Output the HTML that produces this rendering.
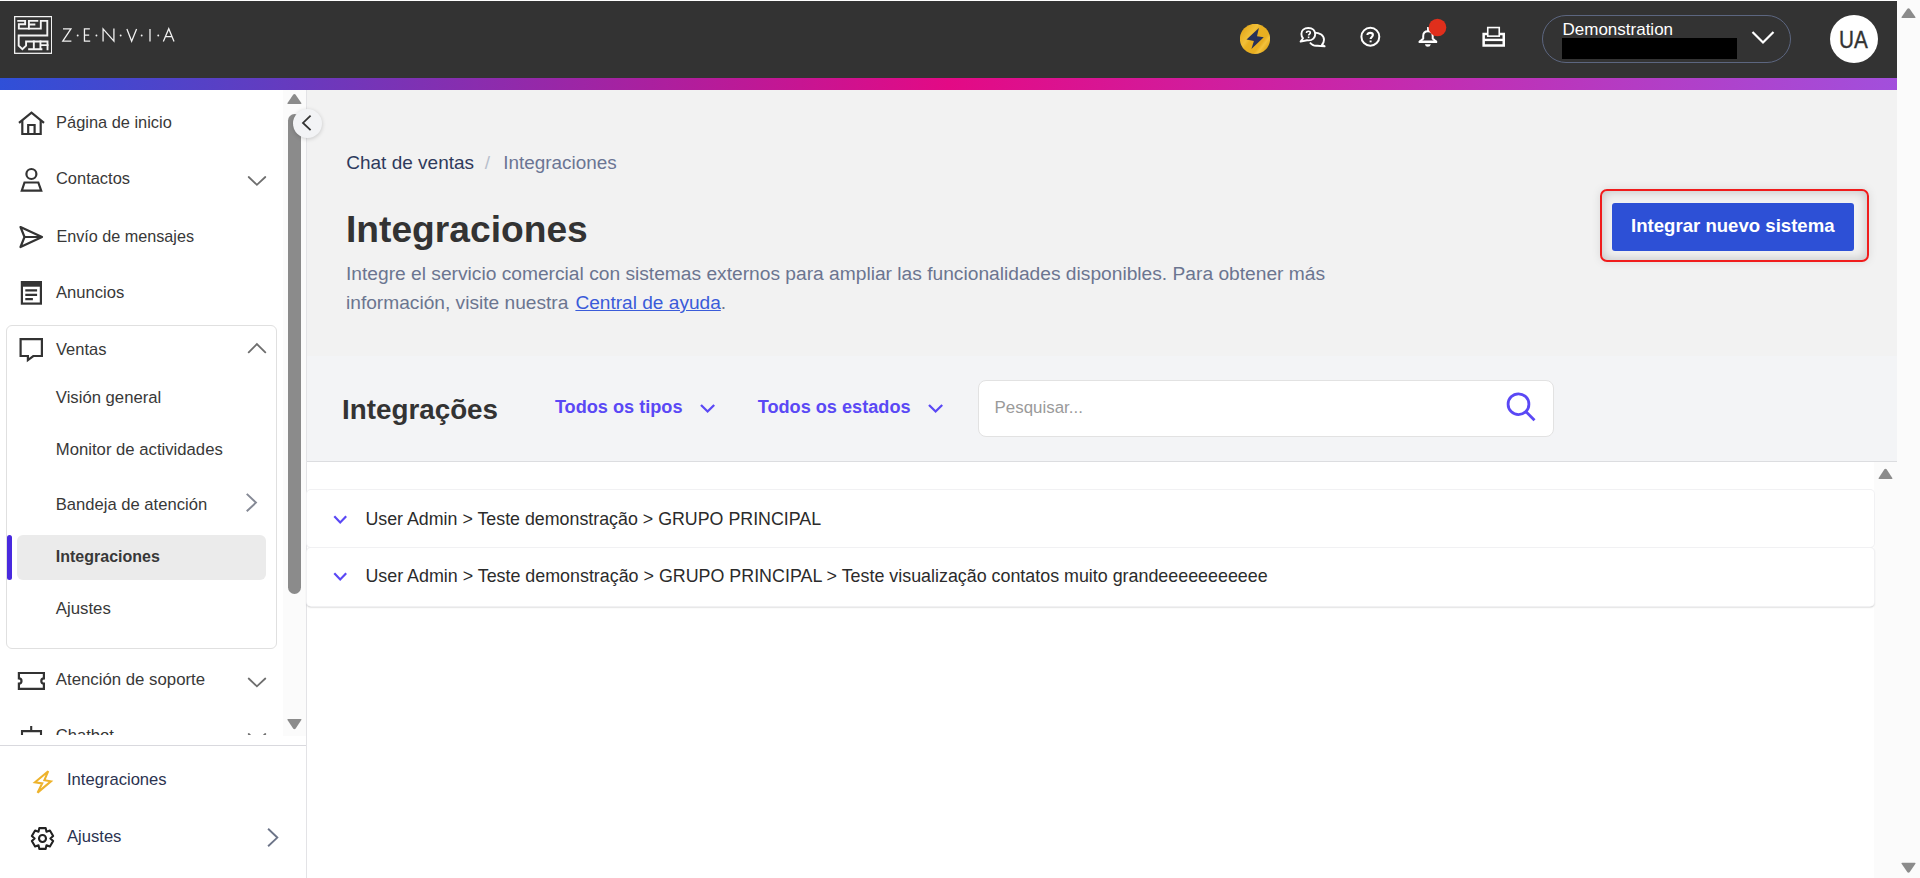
<!DOCTYPE html>
<html><head><meta charset="utf-8"><style>
html,body{margin:0;padding:0;}
body{width:1920px;height:878px;overflow:hidden;position:relative;background:#fff;font-family:"Liberation Sans", sans-serif;}
.t{position:absolute;white-space:nowrap;line-height:1;}
svg{display:block;}
</style></head><body>
<div style="position:absolute;left:307px;top:90px;width:1590px;height:266px;background:#f2f2f2"></div>
<div style="position:absolute;left:307px;top:356px;width:1590px;height:106px;background:#f3f4f6;border-bottom:1px solid #dcdde0;box-sizing:border-box"></div>
<div style="position:absolute;left:307px;top:462px;width:1567px;height:416px;background:#fff"></div>
<div style="position:absolute;left:1874px;top:462px;width:23px;height:416px;background:#fbfbfb"></div>
<div style="position:absolute;left:1897px;top:0px;width:23px;height:878px;background:#fbfbfb"></div>
<svg style="position:absolute;left:0;top:0;overflow:visible" width="1" height="1"><path d="M1907.40 8.77 Q1908.50 7.80 1909.60 8.77 L1915.40 16.90 Q1916.10 18.00 1914.70 18.00 L1902.30 18.00 Q1900.90 18.00 1901.60 16.90 Z" fill="#8b8b8b"/></svg>
<svg style="position:absolute;left:0;top:0;overflow:visible" width="1" height="1"><path d="M1907.40 872.23 Q1908.50 873.20 1909.60 872.23 L1915.40 863.80 Q1916.10 862.70 1914.70 862.70 L1902.30 862.70 Q1900.90 862.70 1901.60 863.80 Z" fill="#8b8b8b"/></svg>
<svg style="position:absolute;left:0;top:0;overflow:visible" width="1" height="1"><path d="M1884.40 469.17 Q1885.50 468.20 1886.60 469.17 L1892.30 477.90 Q1893.00 479.00 1891.60 479.00 L1879.40 479.00 Q1878.00 479.00 1878.70 477.90 Z" fill="#8b8b8b"/></svg>
<div style="position:absolute;left:0px;top:90px;width:306px;height:788px;background:#fff"></div>
<div style="position:absolute;left:306px;top:90px;width:1px;height:788px;background:#e3e3e6"></div>
<div style="position:absolute;left:283px;top:90px;width:23px;height:646px;background:#fbfbfb"></div>
<svg style="position:absolute;left:0;top:0;overflow:visible" width="1" height="1"><path d="M293.30 94.57 Q294.40 93.60 295.50 94.57 L301.30 102.90 Q302.00 104.00 300.60 104.00 L288.20 104.00 Q286.80 104.00 287.50 102.90 Z" fill="#8b8b8b"/></svg>
<div style="position:absolute;left:288px;top:114px;width:13px;height:480px;background:#8b8b8b;border-radius:6.5px"></div>
<svg style="position:absolute;left:0;top:0;overflow:visible" width="1" height="1"><path d="M293.30 728.73 Q294.40 729.70 295.50 728.73 L301.30 720.10 Q302.00 719.00 300.60 719.00 L288.20 719.00 Q286.80 719.00 287.50 720.10 Z" fill="#8b8b8b"/></svg>
<div style="position:absolute;left:0px;top:745px;width:306px;height:1px;background:#d9d9de"></div>
<div style="position:absolute;left:0px;top:1px;width:1897px;height:77px;background:#333333"></div>
<div style="position:absolute;left:0px;top:78px;width:1897px;height:12px;background:linear-gradient(90deg,#2f50d8 0%,#e30a85 50%,#a24fdc 100%)"></div>
<svg style="position:absolute;left:14px;top:16px;" width="38.3" height="38" viewBox="80 75 730 725"><g fill="none" stroke="#f4f4f4" stroke-linecap="square" stroke-linejoin="miter"><rect x="92" y="87" width="706" height="700" stroke-width="24"/><path stroke-width="36" d="M160 168 H292 V233 H172 V315 H591 V168 H715 V446 H169 V639 L240 710 L310 639 V561 H719 V710"/><path stroke-width="36" d="M364 168 V315 M364 168 H525 M364 237 H469 M458 561 V710 M368 710 H603 M584 561 V710 M584 630 H719"/></g></svg>
<svg style="position:absolute;left:55px;top:20px;" width="130" height="30" viewBox="0 0 1920 443"><g fill="none" stroke="#f2f2f2" stroke-width="19" stroke-linejoin="miter"><path d="M118 132 H235 L115 312 H242"/><path d="M515 132 H435 V312 H520 M435 222 H505"/><path d="M710 318 V132 L870 312 V126"/><path d="M1062 132 L1132 315 L1205 132"/><path d="M1403 132 V318"/><path d="M1600 318 L1680 128 L1758 318 M1630 245 H1730"/></g><g fill="#f2f2f2"><circle cx="335" cy="228" r="14"/><circle cx="612" cy="228" r="14"/><circle cx="970" cy="228" r="14"/><circle cx="1280" cy="228" r="14"/><circle cx="1525" cy="228" r="14"/></g></svg>
<svg style="position:absolute;left:1240px;top:24px;" width="30" height="30" viewBox="0 0 30 30"><defs><linearGradient id="gg" x1="0.1" y1="0.2" x2="0.9" y2="0.8"><stop offset="0" stop-color="#e6ab1e"/><stop offset="0.3" stop-color="#f2c038"/><stop offset="0.42" stop-color="#e9b020"/><stop offset="0.75" stop-color="#e8ae21"/><stop offset="0.85" stop-color="#f4c23c"/><stop offset="1" stop-color="#e3a91c"/></linearGradient></defs><circle cx="15" cy="14.9" r="15.1" fill="url(#gg)"/><path d="M18.9 4 L6.5 15.6 L13.9 17 L11.4 25.1 L23.75 13.3 L17 12.3 Z" fill="#283158"/></svg>
<svg style="position:absolute;left:1298px;top:25px;" width="30" height="24" viewBox="0 0 30 24"><g fill="none" stroke="#fff" stroke-width="1.9" stroke-linejoin="round"><path d="M16 7.6 C22 7.6 26 10.5 26 14.8 C26 17 25 18.6 24 19.6 L26.6 21.4 L19.5 20.7 C16.5 21 13.5 19.8 12 17.5"/><path d="M10.3 3 C6 3 3.4 5.6 3.4 9 C3.4 10.8 4 12.2 5 13.2 L2.6 16.6 L9 15.3 C9.6 15.4 10.1 15.4 10.6 15.4 C14.6 15.4 17.2 12.6 17.2 9.2 C17.2 5.6 14.6 3 10.3 3 Z" fill="#333"/></g><path d="M8.5 7.9 C8.5 6.9 9.3 6.2 10.4 6.2 C11.5 6.2 12.3 6.9 12.3 7.8 C12.3 9 10.6 9.2 10.6 10.6" fill="none" stroke="#fff" stroke-width="1.6"/><rect x="9.8" y="11.5" width="1.6" height="1.6" fill="#fff"/></svg>
<svg style="position:absolute;left:1359px;top:26px;" width="22" height="22" viewBox="0 0 22 22"><circle cx="11.35" cy="10.7" r="8.95" fill="none" stroke="#fff" stroke-width="2"/><path d="M8.4 9 C8.4 7.6 9.6 6.9 11.2 6.9 C12.8 6.9 13.9 7.8 13.9 9.1 C13.9 10.9 11.6 11 11.6 13" fill="none" stroke="#fff" stroke-width="2.1"/><rect x="10.6" y="14.5" width="2" height="1.8" fill="#fff"/></svg>
<svg style="position:absolute;left:1417px;top:25px;" width="22" height="24" viewBox="0 0 22 24"><path d="M6.2 13.4 V10.9 C6.2 8 8.1 6.2 10.95 6.2 C13.8 6.2 15.7 8 15.7 10.9 V13.4 L19.4 16.9 H2.5 Z" fill="none" stroke="#fff" stroke-width="2" stroke-linejoin="round"/><rect x="10.05" y="2" width="1.8" height="4" fill="#fff"/><rect x="1.9" y="15.6" width="18.1" height="2.5" rx="0.6" fill="#fff"/><path d="M7.9 19.3 H13.8 Q13.3 21.8 10.85 21.8 Q8.4 21.8 7.9 19.3 Z" fill="#fff"/></svg>
<svg style="position:absolute;left:1428px;top:18px;" width="19" height="19" viewBox="0 0 19 19"><circle cx="9.5" cy="9.5" r="8.8" fill="#e02f1c"/></svg>
<svg style="position:absolute;left:1480px;top:25px;" width="28" height="24" viewBox="0 0 28 24"><g fill="none" stroke="#fff"><rect x="3.65" y="9" width="20.1" height="11.5" stroke-width="2.5"/><path d="M3 14.9 H24.5" stroke-width="2.4"/></g><rect x="7.75" y="2.55" width="11.5" height="8.6" fill="#333" stroke="#fff" stroke-width="1.6"/></svg>
<div style="position:absolute;left:1542px;top:15px;width:249px;height:48px;box-sizing:border-box;border:1px solid #5c6680;border-radius:24px"></div>
<div class="t" style="left:1562.50px;top:20.61px;font-size:17px;color:#fff;font-weight:400;">Demonstration</div>
<div style="position:absolute;left:1562px;top:38px;width:175px;height:21px;background:#000"></div>
<svg style="position:absolute;left:1748px;top:26px;" width="30" height="22" viewBox="0 0 30 22"><path d="M4.5 6 L15 16.5 L25.5 6" fill="none" stroke="#fff" stroke-width="2.2"/></svg>
<div style="position:absolute;left:1830px;top:15px;width:48px;height:48px;background:#fff;border-radius:50%"></div>
<div class="t" style="left:1839.20px;top:29.33px;font-size:23px;color:#333;font-weight:400;transform:scaleX(0.9);transform-origin:0 0;-webkit-text-stroke:0.35px #333;">UA</div>
<div class="t" style="left:56.10px;top:114.11px;font-size:16.4px;color:#383838;font-weight:400;">Página de inicio</div>
<div class="t" style="left:56.00px;top:170.37px;font-size:16.45px;color:#383838;font-weight:400;">Contactos</div>
<div class="t" style="left:56.40px;top:227.58px;font-size:16.2px;color:#383838;font-weight:400;">Envío de mensajes</div>
<div class="t" style="left:56.00px;top:285.14px;font-size:16.6px;color:#383838;font-weight:400;">Anuncios</div>
<div style="position:absolute;left:6px;top:325px;width:271px;height:324px;box-sizing:border-box;border:1px solid #e0e0e0;border-radius:6px;background:#fff"></div>
<div class="t" style="left:56.00px;top:341.23px;font-size:16.5px;color:#383838;font-weight:400;">Ventas</div>
<div class="t" style="left:55.80px;top:390.26px;font-size:16.7px;color:#383838;font-weight:400;">Visión general</div>
<div class="t" style="left:55.80px;top:442.46px;font-size:16.7px;color:#383838;font-weight:400;">Monitor de actividades</div>
<div class="t" style="left:55.80px;top:496.84px;font-size:16.6px;color:#383838;font-weight:400;">Bandeja de atención</div>
<div style="position:absolute;left:17px;top:535px;width:248.6px;height:45px;background:#ebebeb;border-radius:6px"></div>
<div style="position:absolute;left:7px;top:535px;width:5px;height:45px;background:#4829de;border-radius:3px"></div>
<div class="t" style="left:55.80px;top:549.35px;font-size:16px;color:#383838;font-weight:700;">Integraciones</div>
<div class="t" style="left:55.80px;top:600.58px;font-size:16.8px;color:#383838;font-weight:400;">Ajustes</div>
<div class="t" style="left:55.80px;top:671.78px;font-size:16.8px;color:#383838;font-weight:400;">Atención de soporte</div>
<div style="position:absolute;left:0;top:700px;width:283px;height:35px;overflow:hidden"><div class="t" style="left:55.8px;top:28.44px;font-size:16.6px;color:#333">Chatbot</div><svg style="position:absolute;left:18px;top:25px" width="28" height="12" viewBox="0 0 28 12"><path d="M4 11 V6.1 H23 V11 M13.2 0.9 V6.1" fill="none" stroke="#333" stroke-width="2.1"/></svg><svg style="position:absolute;left:245px;top:28px" width="24" height="12" viewBox="0 0 24 12"><path d="M3.7 6 L11.9 13.8 L20.3 6" fill="none" stroke="#6e6e6e" stroke-width="1.8" stroke-linecap="round"/></svg></div>
<div class="t" style="left:67.00px;top:772.14px;font-size:16.6px;color:#2b3350;font-weight:400;">Integraciones</div>
<div class="t" style="left:67.00px;top:829.44px;font-size:16.6px;color:#2b3350;font-weight:400;">Ajustes</div>
<svg style="position:absolute;left:17px;top:110px;" width="29" height="26" viewBox="0 0 29 26"><path d="M2 12.8 L14.5 2.6 L27 12.8" fill="none" stroke="#333" stroke-width="2.2" stroke-linejoin="miter"/><path d="M5.3 10.5 V24 H23.7 V10.5" fill="none" stroke="#333" stroke-width="2.2"/><path d="M11.2 24 V15 H17.6 V24" fill="none" stroke="#333" stroke-width="2.2"/></svg>
<svg style="position:absolute;left:19px;top:166px;" width="25" height="28" viewBox="0 0 25 28"><circle cx="12.4" cy="8" r="5" fill="none" stroke="#333" stroke-width="2.2"/><path d="M5.5 16.5 H19.3 L22.2 24.6 H2.8 Z" fill="none" stroke="#333" stroke-width="2.2"/></svg>
<svg style="position:absolute;left:18px;top:225px;" width="27" height="24" viewBox="0 0 27 24"><path d="M2.5 2 L24 12 L2.5 22 L6.5 12 Z M6.5 12 H24" fill="none" stroke="#333" stroke-width="2.2" stroke-linejoin="round" stroke-width="2.1"/></svg>
<svg style="position:absolute;left:19px;top:280px;" width="25" height="27" viewBox="0 0 25 27"><rect x="2.9" y="2.1" width="19" height="21.5" fill="none" stroke="#333" stroke-width="2.2"/><rect x="2" y="1.2" width="21" height="5.5" fill="#333"/><path d="M6.3 10.3 H18.1 M6.3 14.9 H18.1 M6.3 19.2 H13.9" fill="none" stroke="#333" stroke-width="2.2" stroke-width="1.9"/></svg>
<svg style="position:absolute;left:18px;top:336px;" width="28" height="28" viewBox="0 0 28 28"><path d="M2.6 3.2 H23.9 V20 H15.3 L9.9 24.1 V20 H2.6 Z" fill="none" stroke="#333" stroke-width="2.2" stroke-linejoin="miter" stroke-width="2.1"/></svg>
<svg style="position:absolute;left:16px;top:670px;" width="31" height="22" viewBox="0 0 31 22"><path d="M2.9 3 H27.9 V8.3 A2.6 2.6 0 0 0 27.9 13.5 V18.8 H2.9 V13.5 A2.6 2.6 0 0 0 2.9 8.3 Z" fill="none" stroke="#333" stroke-width="2.2" stroke-width="2" stroke-linejoin="miter"/></svg>
<svg style="position:absolute;left:31px;top:769px;" width="23" height="27" viewBox="0 0 23 27"><path d="M17.2 2.2 L4 13.3 L11.2 14.4 L6.6 23.6 L19.9 12.3 L13.4 11.2 Z" fill="none" stroke="#eeb32c" stroke-width="2.1" stroke-linejoin="miter" stroke-miterlimit="3"/></svg>
<svg style="position:absolute;left:30.3px;top:826px;" width="25" height="25" viewBox="0 0 25 25"><path d="M9.28 2.09 L15.72 2.09 L16.43 5.64 L16.47 5.67 L19.91 4.50 L23.13 10.08 L20.40 12.47 L20.40 12.53 L23.13 14.92 L19.91 20.50 L16.47 19.33 L16.43 19.36 L15.72 22.91 L9.28 22.91 L8.57 19.36 L8.53 19.33 L5.09 20.50 L1.87 14.92 L4.60 12.53 L4.60 12.47 L1.87 10.08 L5.09 4.50 L8.53 5.67 L8.57 5.64 Z" fill="none" stroke="#222" stroke-width="2.1" stroke-linejoin="round"/><circle cx="12.5" cy="12.5" r="3.5" fill="none" stroke="#222" stroke-width="2.1"/></svg>
<svg style="position:absolute;left:245px;top:172px;" width="24" height="16" viewBox="0 0 24 16"><path d="M3.7 5 L11.9 12.8 L20.3 5" fill="none" stroke="#6e6e6e" stroke-width="1.8" stroke-linecap="round"/></svg>
<svg style="position:absolute;left:245px;top:340px;" width="24" height="16" viewBox="0 0 24 16"><path d="M3.7 12.4 L11.9 4 L20.3 12.4" fill="none" stroke="#6e6e6e" stroke-width="1.8" stroke-linecap="round"/></svg>
<svg style="position:absolute;left:243px;top:493px;" width="16" height="21" viewBox="0 0 16 21"><path d="M3.75 0.9 L12.9 9.6 L3.75 18.3" fill="none" stroke="#858995" stroke-width="2"/></svg>
<svg style="position:absolute;left:245px;top:673px;" width="24" height="16" viewBox="0 0 24 16"><path d="M3.7 5.5 L11.9 13.3 L20.3 5.5" fill="none" stroke="#6e6e6e" stroke-width="1.8" stroke-linecap="round"/></svg>
<svg style="position:absolute;left:265px;top:827px;" width="16" height="23" viewBox="0 0 16 23"><path d="M3.1 1.8 L12.3 10.6 L3.1 19.3" fill="none" stroke="#6c7488" stroke-width="1.9"/></svg>
<div style="position:absolute;left:293px;top:109px;width:29px;height:29px;background:#f2f3f5;border-radius:50%;box-shadow:0 1px 4px rgba(0,0,0,0.18)"></div>
<svg style="position:absolute;left:293px;top:109px;" width="29" height="29" viewBox="0 0 29 29"><path d="M17.6 6.6 L10 13.9 L17.6 21.2" fill="none" stroke="#333" stroke-width="1.8"/></svg>
<div class="t" style="left:346.25px;top:153.31px;font-size:19px;color:#2e3a5c"><span style="display:inline-block;width:138.5px">Chat de ventas</span><span style="display:inline-block;width:18.5px;color:#b8bfcc">/</span><span style="color:#6b7594;font-size:18.9px">Integraciones</span></div>
<div class="t" style="left:346.00px;top:210.90px;font-size:37.2px;color:#333333;font-weight:700;">Integraciones</div>
<div class="t" style="left:346.00px;top:263.74px;font-size:19.2px;color:#6b7590;font-weight:400;">Integre el servicio comercial con sistemas externos para ampliar las funcionalidades disponibles. Para obtener más</div>
<div class="t" style="left:346px;top:292.69px;font-size:19.15px;color:#6b7590"><span style="display:inline-block;width:229.4px">información, visite nuestra</span><span style="display:inline-block;width:145.4px;font-size:19.1px;color:#3a5bd9;text-decoration:underline;">Central de ayuda</span>.</div>
<div style="position:absolute;left:1600px;top:189px;width:269px;height:73px;box-sizing:border-box;border:2px solid #f01c1c;border-radius:7px;box-shadow:inset 0 0 11px rgba(0,0,0,0.22), 0 0 10px rgba(0,0,0,0.10)"></div>
<div style="position:absolute;left:1612px;top:203px;width:242px;height:48px;background:#2d50d6;border-radius:3px"></div>
<div class="t" style="left:1631.00px;top:216.95px;font-size:18.6px;color:#fff;font-weight:700;">Integrar nuevo sistema</div>
<div class="t" style="left:342.00px;top:396.06px;font-size:27.8px;color:#333;font-weight:700;">Integrações</div>
<div class="t" style="left:554.90px;top:397.93px;font-size:18.15px;color:#5a48f5;font-weight:700;">Todos os tipos</div>
<svg style="position:absolute;left:697px;top:399px;" width="21" height="18" viewBox="0 0 21 18"><path d="M4 6 L10.6 12.5 L17.2 6" fill="none" stroke="#5a48f5" stroke-width="2.3"/></svg>
<div class="t" style="left:757.70px;top:397.93px;font-size:18.15px;color:#5a48f5;font-weight:700;">Todos os estados</div>
<svg style="position:absolute;left:925px;top:399px;" width="21" height="18" viewBox="0 0 21 18"><path d="M4 6 L10.6 12.5 L17.2 6" fill="none" stroke="#5a48f5" stroke-width="2.3"/></svg>
<div style="position:absolute;left:978px;top:380px;width:576px;height:57px;box-sizing:border-box;background:#fff;border:1px solid #e2e2e2;border-radius:8px"></div>
<div class="t" style="left:994.60px;top:399.99px;font-size:16.9px;color:#9a9a9a;font-weight:400;">Pesquisar...</div>
<svg style="position:absolute;left:1500px;top:386px;" width="40" height="40" viewBox="0 0 40 40"><circle cx="18.5" cy="18.2" r="10.4" fill="none" stroke="#5a48f5" stroke-width="2.8"/><path d="M25.8 25.5 L34.5 34.2" stroke="#5a48f5" stroke-width="2.8"/></svg>
<div style="position:absolute;left:307px;top:490px;width:1567px;height:57px;background:#fff;border-radius:4px;box-shadow:0 0 0 1px #f1f1f3, 0 1px 1px rgba(0,0,0,0.08)"></div>
<div style="position:absolute;left:307px;top:548px;width:1567px;height:58px;background:#fff;border-radius:4px;box-shadow:0 0 0 1px #f1f1f3, 0 1px 2px rgba(0,0,0,0.35)"></div>
<svg style="position:absolute;left:330px;top:510px;" width="20" height="18" viewBox="0 0 20 18"><path d="M4.3 6.3 L10.2 12.4 L16.2 6.3" fill="none" stroke="#5a48f5" stroke-width="2.2"/></svg>
<svg style="position:absolute;left:330px;top:567px;" width="20" height="18" viewBox="0 0 20 18"><path d="M4.3 6.3 L10.2 12.4 L16.2 6.3" fill="none" stroke="#5a48f5" stroke-width="2.2"/></svg>
<div class="t" style="left:365.40px;top:511.01px;font-size:17.82px;color:#2b2b2b;font-weight:400;">User Admin &gt; Teste demonstração &gt; GRUPO PRINCIPAL</div>
<div class="t" style="left:365.40px;top:568.17px;font-size:17.87px;color:#2b2b2b;font-weight:400;">User Admin &gt; Teste demonstração &gt; GRUPO PRINCIPAL &gt; Teste visualização contatos muito grandeeeeeeeeeee</div>
</body></html>
